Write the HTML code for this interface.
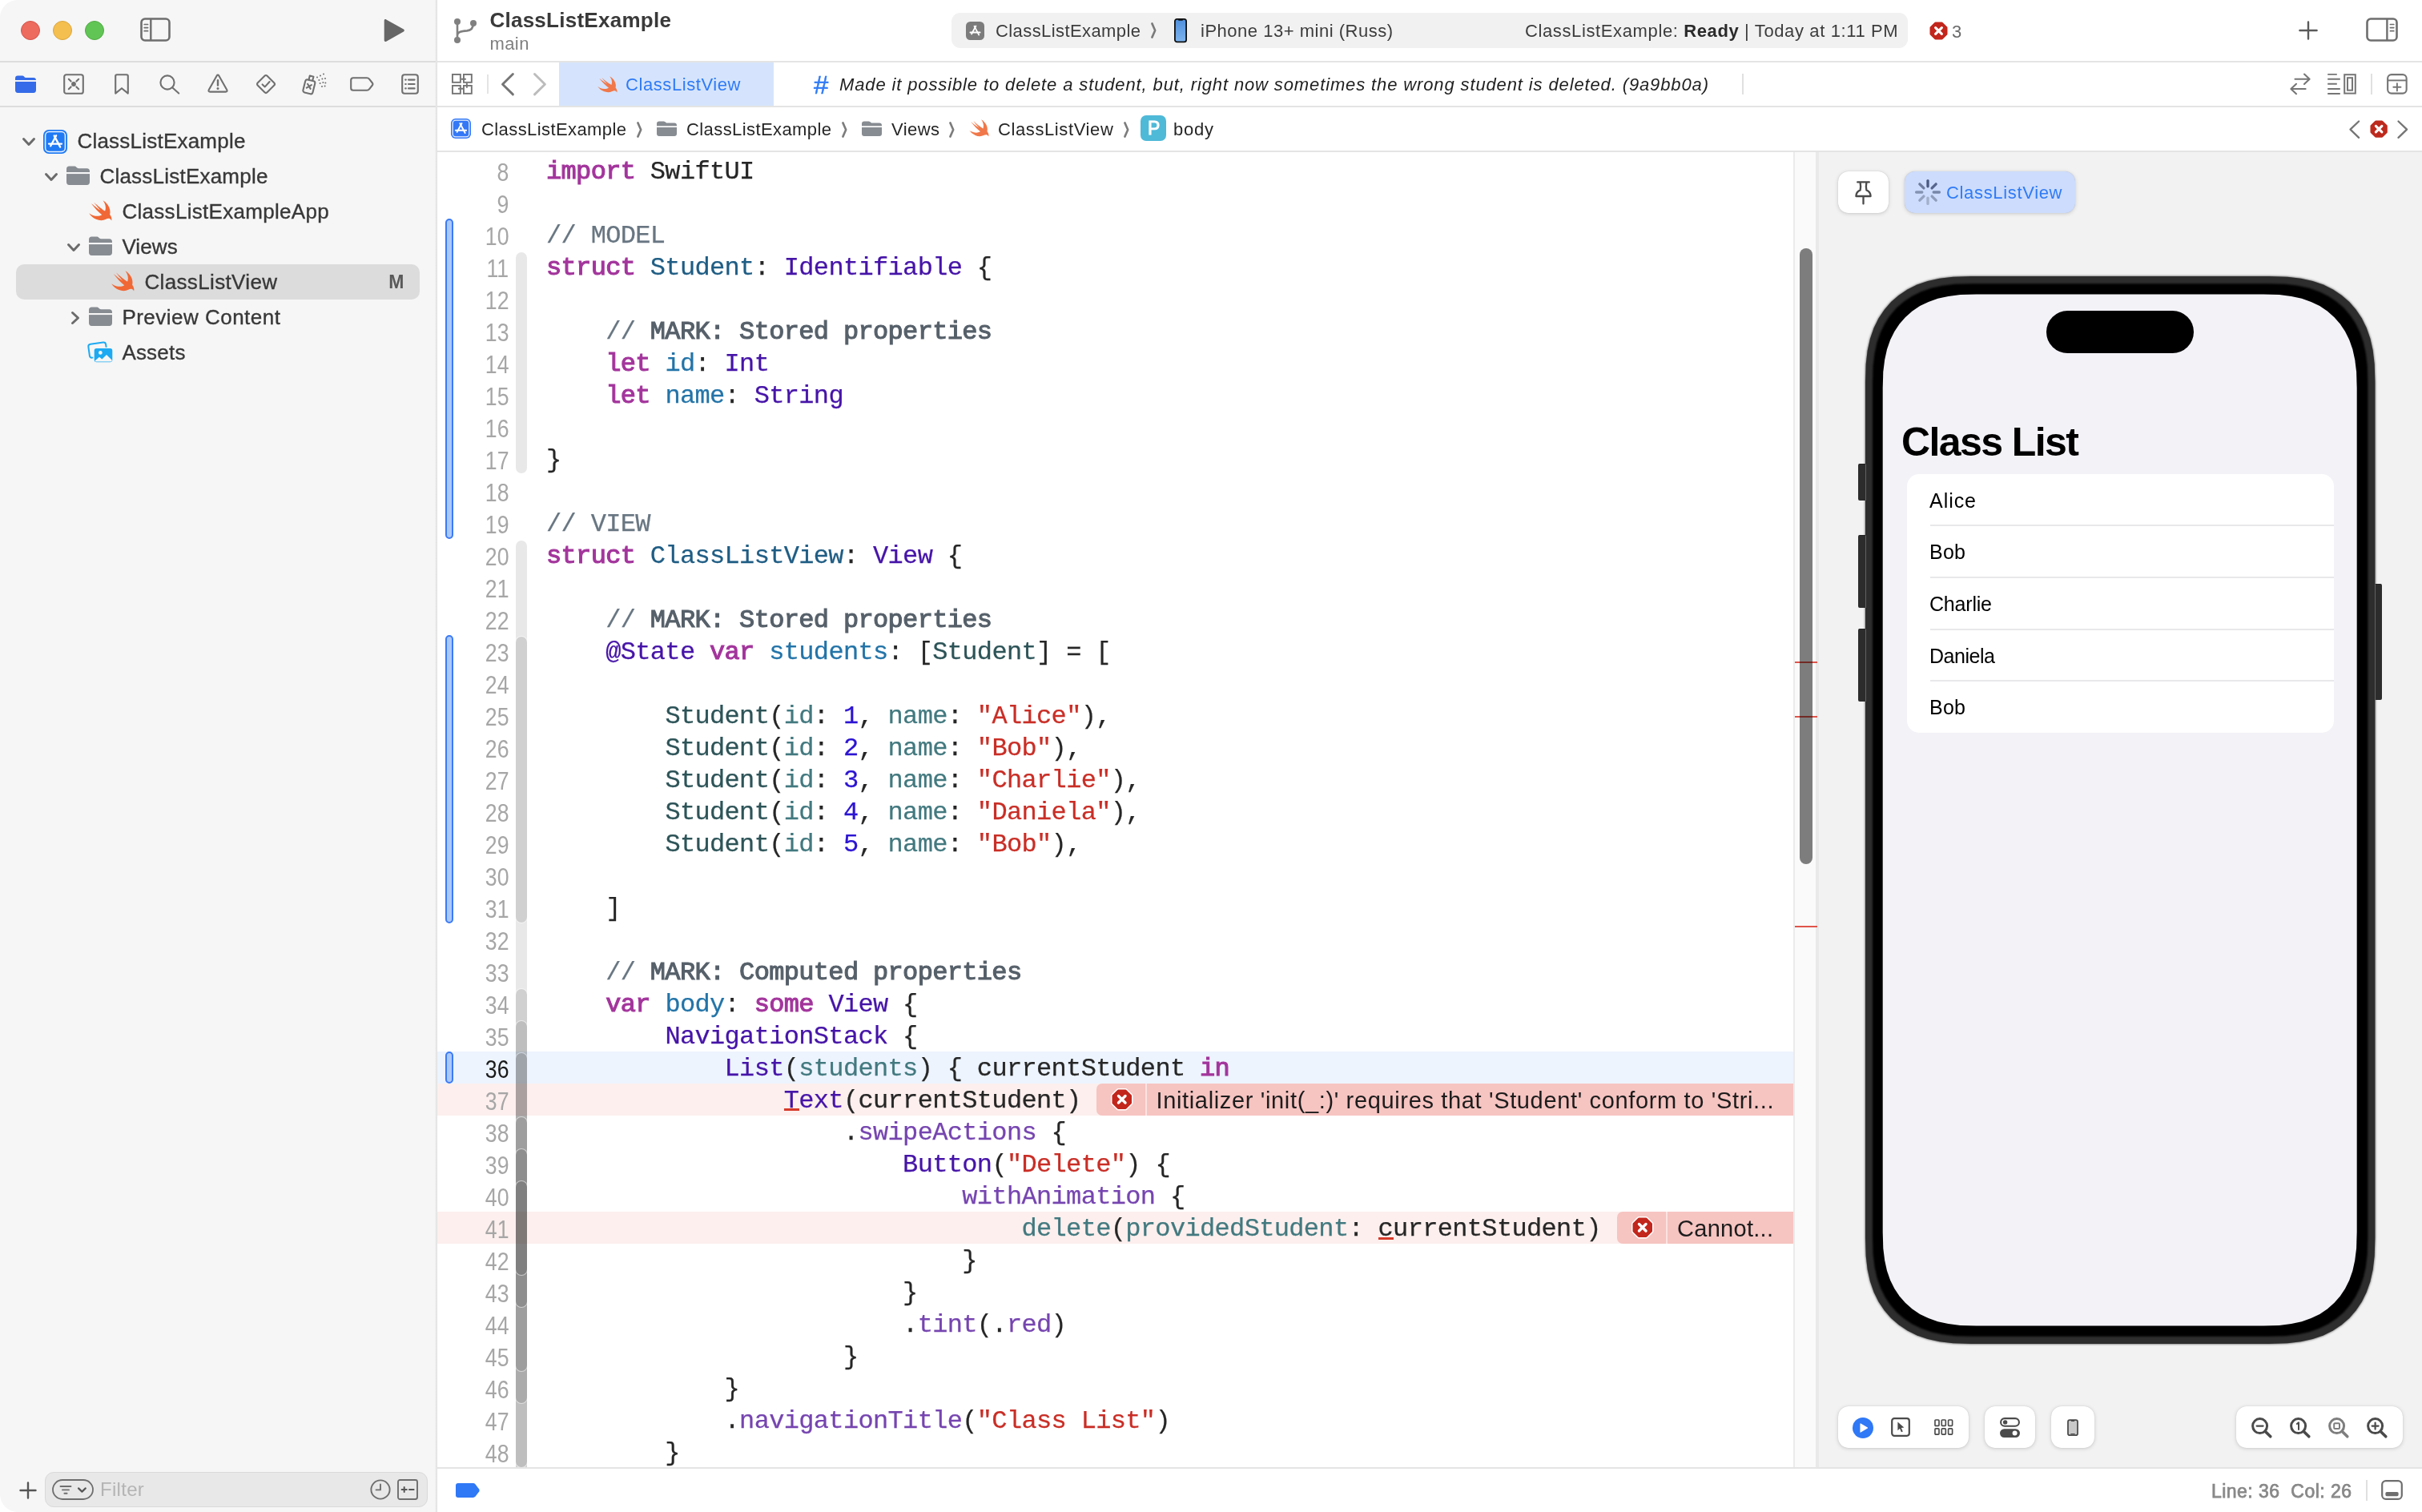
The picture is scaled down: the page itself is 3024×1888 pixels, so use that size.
<!DOCTYPE html>
<html lang="en">
<head>
<meta charset="utf-8">
<title>ClassListExample — ClassListView.swift</title>
<style>
*{box-sizing:border-box;margin:0;padding:0}
html,body{width:3024px;height:1888px;overflow:hidden;background:#fff}
body{position:relative;font-family:"Liberation Sans",sans-serif;color:#262626;-webkit-font-smoothing:antialiased}
#app{position:absolute;left:0;top:0;width:3024px;height:1888px;will-change:transform;overflow:hidden}
.abs{position:absolute}
.t{position:absolute;white-space:pre;line-height:1}
svg{position:absolute;overflow:visible}
/* ---------- frame ---------- */
#sidebar{left:0;top:0;width:544px;height:1888px;background:#f6f6f6;border-radius:22px 0 0 22px}
#sbdiv{left:542.5px;top:0;width:3.5px;height:1888px;background:linear-gradient(90deg,#f4f4f4,#dedede)}
.hl{position:absolute;height:2px;background:#e4e4e4}
.hls{position:absolute;height:2px;background:#dddddd}
/* ---------- sidebar tree ---------- */
.row{position:absolute;left:0;width:544px;height:44px}
.row .t{font-size:26px;top:9px;color:#2b2b2b}
#sel{left:20px;top:330px;width:504px;height:44px;border-radius:10px;background:#dcdcdc}
/* ---------- code ---------- */
#code{left:546px;top:190px;width:1693px;height:1642px;overflow:hidden;background:#fff}
.ln{position:absolute;left:0;width:1693px;height:40px}
.num{position:absolute;right:1604px;font:31px/40px "Liberation Sans",sans-serif;color:#a6a6a6;white-space:pre;height:40px;top:3px;transform:scaleX(.86);transform-origin:100% 50%}
.src{position:absolute;left:136px;top:1.5px;height:40px;font:32px/40px "Liberation Mono",monospace;letter-spacing:-0.658px;white-space:pre;color:#262626;-webkit-text-stroke:0.25px currentColor}
.k{color:#a3359c;-webkit-text-stroke:1.1px #a3359c}
.c{color:#687682}
.m{color:#56606a;-webkit-text-stroke:1.1px #56606a}
.s{color:#c92e26}
.n{color:#2c14d2}
.td{color:#1f5d84}
.od{color:#2374a8}
.pc{color:#2d5458}
.pf{color:#42797f}
.st{color:#4614a8}
.sf{color:#7645b0}
.cb{position:absolute;left:10px;width:10px;border:2px solid #3b7af5;background:#abc8fb;border-radius:5px}
.fr{position:absolute;left:98px;width:14px;border-radius:7px 7px 0 0}
</style>
</head>
<body>
<div id="app">
<div id="sidebar" class="abs"></div>
<div id="sbdiv" class="abs"></div>
<div class="hls" style="left:0;top:76px;width:544px"></div>
<div class="hls" style="left:0;top:132px;width:544px"></div>
<div class="hl" style="left:546px;top:76px;width:2478px"></div>
<div class="hl" style="left:546px;top:132px;width:2478px"></div>
<div class="hl" style="left:546px;top:188px;width:2478px"></div>
<div class="hl" style="left:546px;top:1832px;width:2478px"></div>
<div class="abs" style="left:26px;top:26px;width:24px;height:24px;border-radius:12px;background:#ed6a5f;border:1px solid #d5544a"></div>
<div class="abs" style="left:66px;top:26px;width:24px;height:24px;border-radius:12px;background:#f5bf4f;border:1px solid #dba53b"></div>
<div class="abs" style="left:106px;top:26px;width:24px;height:24px;border-radius:12px;background:#61c555;border:1px solid #4fab43"></div>
<svg style="left:175px;top:22px" width="38" height="30" viewBox="0 0 38 30" ><rect x="1.5" y="1.5" width="35" height="27" rx="4.5" fill="none" stroke="#6e6e6e" stroke-width="2.6"/><path d="M13.3 2 V28" stroke="#6e6e6e" stroke-width="2.4"/><path d="M5.2 8.5 H9.6 M5.2 12.6 H9.6 M5.2 16.7 H9.6" stroke="#6e6e6e" stroke-width="1.7" stroke-linecap="round"/></svg>
<svg style="left:478.7px;top:23.8px" width="26.6" height="28.2" viewBox="1.6 0.9 23.8 26.2" ><path d="M1.8 2.6 C1.8 1.2 3 .6 4.2 1.3 L24.3 12.6 C25.5 13.3 25.5 14.7 24.3 15.4 L4.2 26.7 C3 27.4 1.8 26.8 1.8 25.4 Z" fill="#666"/></svg>
<svg style="left:19px;top:94px" width="26" height="22" viewBox="0 0 30 24" preserveAspectRatio="none"><path fill="#356be8" d="M0 4.2C0 1.9 1.3 0.6 3.6 0.6h6.2c1.3 0 2 .3 2.9 1.1l1 .9c.6.5 1.1.7 2 .7h10.7c2.3 0 3.6 1.3 3.6 3.6v13.4c0 2.4-1.3 3.7-3.6 3.7H3.6C1.3 24 0 22.7 0 20.3z"/><rect x="0" y="6.6" width="30" height="2.1" fill="#f6f6f6"/></svg>
<svg style="left:79px;top:92px" width="26" height="26" viewBox="0 0 26 26" ><rect x="1.2" y="1.2" width="23.6" height="23.6" rx="2.6" fill="none" stroke="#707070" stroke-width="2.1" stroke-linecap="round" stroke-linejoin="round"/><circle cx="13" cy="13" r="2.9" fill="#707070"/><path d="M6.8 6.8 L9.6 9.6 M19.2 6.8 L16.4 9.6 M6.8 19.2 L9.6 16.4 M19.2 19.2 L16.4 16.4" fill="none" stroke="#707070" stroke-width="2.1" stroke-linecap="round" stroke-linejoin="round"/></svg>
<svg style="left:143px;top:92px" width="18" height="26" viewBox="0 0 18 26" ><path d="M1.2 3 Q1.2 1.2 3 1.2 H15 Q16.8 1.2 16.8 3 V24.6 L9 18.2 L1.2 24.6 Z" fill="none" stroke="#707070" stroke-width="2.1" stroke-linecap="round" stroke-linejoin="round"/></svg>
<svg style="left:199px;top:93px" width="26" height="25" viewBox="0 0 26 25" ><circle cx="10" cy="10" r="8.6" fill="none" stroke="#707070" stroke-width="2.1" stroke-linecap="round" stroke-linejoin="round" stroke-width="2.3"/><path d="M16.4 16.4 L24.2 23.6" fill="none" stroke="#707070" stroke-width="2.1" stroke-linecap="round" stroke-linejoin="round" stroke-width="2.8"/></svg>
<svg style="left:259px;top:92px" width="26" height="24" viewBox="0 0 26 24" ><path d="M13 1.6 Q13.8 1.6 14.3 2.5 L24.3 20.2 Q25.2 22.6 22.8 22.6 H3.2 Q.8 22.6 1.7 20.2 L11.7 2.5 Q12.2 1.6 13 1.6 Z" fill="none" stroke="#707070" stroke-width="2.1" stroke-linecap="round" stroke-linejoin="round"/><path d="M13 8.2 V14.6" stroke="#707070" stroke-width="2.4" stroke-linecap="round"/><circle cx="13" cy="18.4" r="1.5" fill="#707070"/></svg>
<svg style="left:319px;top:92px" width="26" height="26" viewBox="0 0 26 26" ><rect x="4.6" y="4.6" width="16.8" height="16.8" rx="2.2" transform="rotate(45 13 13)" fill="none" stroke="#707070" stroke-width="2.1" stroke-linecap="round" stroke-linejoin="round"/><path d="M8.6 13.4 L11.8 16.4 L17.6 10" fill="none" stroke="#707070" stroke-width="2.1" stroke-linecap="round" stroke-linejoin="round"/></svg>
<svg style="left:377px;top:91px" width="31" height="28" viewBox="0 0 31 28" ><g transform="rotate(14 10 16)"><rect x="3" y="9.4" width="12.4" height="16.4" rx="2.4" fill="none" stroke="#707070" stroke-width="2.1" stroke-linecap="round" stroke-linejoin="round"/><path d="M6.8 9 V4 H11.6 V9" fill="none" stroke="#707070" stroke-width="2.1" stroke-linecap="round" stroke-linejoin="round"/><path d="M6.6 14.6 L11.6 19.6 M11.6 14.6 L6.6 19.6" fill="none" stroke="#707070" stroke-width="2.1" stroke-linecap="round" stroke-linejoin="round" stroke-width="1.8"/></g><g fill="#707070"><circle cx="19" cy="5.6" r="1"/><circle cx="23" cy="3.4" r="1"/><circle cx="27" cy="1.6" r="1"/><circle cx="21.4" cy="9" r="1"/><circle cx="25.4" cy="7.6" r="1"/><circle cx="29" cy="7" r="1"/><circle cx="22.6" cy="13" r="1"/><circle cx="26.4" cy="12" r="1"/><circle cx="29.4" cy="12.6" r="1"/><circle cx="25" cy="17" r="1"/><circle cx="28.6" cy="16.6" r="1"/></g></svg>
<svg style="left:437px;top:96px" width="30" height="18" viewBox="0 0 30 18" ><path d="M4 1.2 H21 Q23 1.2 24.2 2.8 L28.2 8 Q28.9 9 28.2 10 L24.2 15.2 Q23 16.8 21 16.8 H4 Q1.2 16.8 1.2 14 V4 Q1.2 1.2 4 1.2 Z" fill="none" stroke="#707070" stroke-width="2.1" stroke-linecap="round" stroke-linejoin="round"/></svg>
<svg style="left:501px;top:92px" width="22" height="26" viewBox="0 0 22 26" ><rect x="1.2" y="1.2" width="19.6" height="23.6" rx="3" fill="none" stroke="#707070" stroke-width="2.1" stroke-linecap="round" stroke-linejoin="round"/><path d="M9 7.6 H16.6 M9 13 H16.6 M9 18.4 H16.6" fill="none" stroke="#707070" stroke-width="2.1" stroke-linecap="round" stroke-linejoin="round" stroke-width="1.9"/><path d="M5.2 7.6 H5.8 M5.2 13 H5.8 M5.2 18.4 H5.8" fill="none" stroke="#707070" stroke-width="2.1" stroke-linecap="round" stroke-linejoin="round" stroke-width="1.9"/></svg>
<div id="sel" class="abs"></div>
<svg style="left:28px;top:172.0px" width="16" height="10" viewBox="0 0 16 10" ><path d="M1.5 1.5 L8.0 8.5 L14.5 1.5" fill="none" stroke="#6b6b6b" stroke-width="3" stroke-linecap="round" stroke-linejoin="round"/></svg>
<svg style="left:54px;top:161.5px" width="30" height="30" viewBox="0 0 30 30" ><rect width="30" height="30" rx="7" fill="#1f7af4"/><rect x="2.6" y="2.6" width="24.8" height="24.8" rx="4.6" fill="none" stroke="#fff" stroke-width="1.5" opacity=".9"/><g stroke="#fff" stroke-width="2.3" stroke-linecap="round" fill="none"><path d="M16.2 7.2 L9.2 20.2"/><path d="M13.6 7.4 L21.2 21.6"/><path d="M7 17.6 H23"/></g></svg>
<div class="t" style="left:96.4px;top:163.2px;font-size:26px;color:#383838;letter-spacing:0.224px;-webkit-text-stroke:0.35px #383838;">ClassListExample</div>
<svg style="left:56px;top:216.0px" width="16" height="10" viewBox="0 0 16 10" ><path d="M1.5 1.5 L8.0 8.5 L14.5 1.5" fill="none" stroke="#6b6b6b" stroke-width="3" stroke-linecap="round" stroke-linejoin="round"/></svg>
<svg style="left:83px;top:206.7px" width="29" height="24" viewBox="0 0 30 24" preserveAspectRatio="none"><path fill="#878c92" d="M0 4.2C0 1.9 1.3 0.6 3.6 0.6h6.2c1.3 0 2 .3 2.9 1.1l1 .9c.6.5 1.1.7 2 .7h10.7c2.3 0 3.6 1.3 3.6 3.6v13.4c0 2.4-1.3 3.7-3.6 3.7H3.6C1.3 24 0 22.7 0 20.3z"/><rect x="0" y="8.0" width="30" height="2.1" fill="#f6f6f6"/></svg>
<div class="t" style="left:124.4px;top:207.2px;font-size:26px;color:#383838;letter-spacing:0.224px;-webkit-text-stroke:0.35px #383838;">ClassListExample</div>
<svg style="left:111px;top:249.9px" width="29" height="26.2" viewBox="2.3 3.3 18.6 16.9" preserveAspectRatio="none"><path fill="#f06835" d="M13.543 3.41c4.114 2.47 6.545 7.162 5.549 11.131-.024.093-.05.181-.076.272l.002.001c2.062 2.538 1.5 5.258 1.236 4.745-1.072-2.086-3.066-1.568-4.088-1.043a6.803 6.803 0 0 1-.281.158l-.02.012-.002.002c-2.115 1.123-4.957 1.205-7.812-.022a12.568 12.568 0 0 1-5.64-4.838c.649.48 1.35.902 2.097 1.252 3.019 1.414 6.051 1.311 8.197-.002C9.651 12.73 7.101 9.67 5.146 7.191a10.628 10.628 0 0 1-1.005-1.384c2.34 2.142 6.038 4.83 7.365 5.576C8.69 8.408 6.208 4.743 6.324 4.86c4.436 4.47 8.528 6.996 8.528 6.996.154.085.27.154.36.213.085-.215.16-.437.224-.668.708-2.588-.09-5.548-1.893-7.992z"/></svg>
<div class="t" style="left:152.4px;top:251.2px;font-size:26px;color:#383838;letter-spacing:0.295px;-webkit-text-stroke:0.35px #383838;">ClassListExampleApp</div>
<svg style="left:84px;top:304.0px" width="16" height="10" viewBox="0 0 16 10" ><path d="M1.5 1.5 L8.0 8.5 L14.5 1.5" fill="none" stroke="#6b6b6b" stroke-width="3" stroke-linecap="round" stroke-linejoin="round"/></svg>
<svg style="left:111px;top:294.7px" width="29" height="24" viewBox="0 0 30 24" preserveAspectRatio="none"><path fill="#878c92" d="M0 4.2C0 1.9 1.3 0.6 3.6 0.6h6.2c1.3 0 2 .3 2.9 1.1l1 .9c.6.5 1.1.7 2 .7h10.7c2.3 0 3.6 1.3 3.6 3.6v13.4c0 2.4-1.3 3.7-3.6 3.7H3.6C1.3 24 0 22.7 0 20.3z"/><rect x="0" y="8.0" width="30" height="2.1" fill="#f6f6f6"/></svg>
<div class="t" style="left:152.4px;top:295.2px;font-size:26px;color:#383838;letter-spacing:0.102px;-webkit-text-stroke:0.35px #383838;">Views</div>
<svg style="left:139px;top:337.9px" width="29" height="26.2" viewBox="2.3 3.3 18.6 16.9" preserveAspectRatio="none"><path fill="#f06835" d="M13.543 3.41c4.114 2.47 6.545 7.162 5.549 11.131-.024.093-.05.181-.076.272l.002.001c2.062 2.538 1.5 5.258 1.236 4.745-1.072-2.086-3.066-1.568-4.088-1.043a6.803 6.803 0 0 1-.281.158l-.02.012-.002.002c-2.115 1.123-4.957 1.205-7.812-.022a12.568 12.568 0 0 1-5.64-4.838c.649.48 1.35.902 2.097 1.252 3.019 1.414 6.051 1.311 8.197-.002C9.651 12.73 7.101 9.67 5.146 7.191a10.628 10.628 0 0 1-1.005-1.384c2.34 2.142 6.038 4.83 7.365 5.576C8.69 8.408 6.208 4.743 6.324 4.86c4.436 4.47 8.528 6.996 8.528 6.996.154.085.27.154.36.213.085-.215.16-.437.224-.668.708-2.588-.09-5.548-1.893-7.992z"/></svg>
<div class="t" style="left:180.4px;top:339.2px;font-size:26px;color:#383838;letter-spacing:0.362px;-webkit-text-stroke:0.35px #383838;">ClassListView</div>
<div class="t" style="left:485.3px;top:340.5px;font-size:23px;color:#5a5a5a;font-weight:700;">M</div>
<svg style="left:88.5px;top:388.5px" width="10" height="16" viewBox="0 0 10 16" ><path d="M1.5 1.5 L8.5 8.0 L1.5 14.5" fill="none" stroke="#6b6b6b" stroke-width="3" stroke-linecap="round" stroke-linejoin="round"/></svg>
<svg style="left:111px;top:382.7px" width="29" height="24" viewBox="0 0 30 24" preserveAspectRatio="none"><path fill="#878c92" d="M0 4.2C0 1.9 1.3 0.6 3.6 0.6h6.2c1.3 0 2 .3 2.9 1.1l1 .9c.6.5 1.1.7 2 .7h10.7c2.3 0 3.6 1.3 3.6 3.6v13.4c0 2.4-1.3 3.7-3.6 3.7H3.6C1.3 24 0 22.7 0 20.3z"/><rect x="0" y="8.0" width="30" height="2.1" fill="#f6f6f6"/></svg>
<div class="t" style="left:152.4px;top:383.2px;font-size:26px;color:#383838;letter-spacing:0.481px;-webkit-text-stroke:0.35px #383838;">Preview Content</div>
<svg style="left:109px;top:425.5px" width="33" height="28" viewBox="0 0 33 28" ><rect x="2" y="2.6" width="22" height="17" rx="3" transform="rotate(-8 13 11)" fill="none" stroke="#1daaf2" stroke-width="2"/><rect x="8" y="8.4" width="24" height="18.6" rx="3.4" fill="#1daaf2" stroke="#f6f6f6" stroke-width="1.4"/><circle cx="16.4" cy="14.4" r="2.3" fill="#f6f6f6"/><path d="M9.6 24.6 L15 19.8 L18.4 22.6 L24 17 L30.6 23.4 V25 Q30.6 25.6 30 25.6 H10.4 Q9.6 25.6 9.6 24.6 Z" fill="#f6f6f6"/></svg>
<div class="t" style="left:152.4px;top:427.2px;font-size:26px;color:#383838;letter-spacing:0.194px;-webkit-text-stroke:0.35px #383838;">Assets</div>
<svg style="left:24px;top:1850px" width="22" height="22" viewBox="0 0 22 22" ><path d="M11 1.5 V20.5 M1.5 11 H20.5" stroke="#555" stroke-width="2.4" stroke-linecap="round"/></svg>
<div class="abs" style="left:56px;top:1838px;width:478px;height:44px;border-radius:11px;background:#e8e8e8;border:1.5px solid #d9d9d9"></div>
<svg style="left:65px;top:1847px" width="52" height="26" viewBox="0 0 52 26" ><rect x="1" y="1" width="50" height="24" rx="12" fill="none" stroke="#6e6e6e" stroke-width="1.8"/><path d="M10.5 9 H23.5 M13 13.4 H21 M15.4 17.8 H18.6" stroke="#6e6e6e" stroke-width="1.9" stroke-linecap="round"/><path d="M33 11.4 L37.4 15.6 L41.8 11.4" fill="none" stroke="#555" stroke-width="2.2" stroke-linecap="round" stroke-linejoin="round"/></svg>
<div class="t" style="left:125px;top:1848px;font-size:24px;color:#b4b4b4;letter-spacing:0.3px;">Filter</div>
<svg style="left:462px;top:1847px" width="26" height="26" viewBox="0 0 26 26" ><circle cx="13" cy="13" r="11.6" fill="none" stroke="#6e6e6e" stroke-width="1.9"/><path d="M13 6.4 V13.4 H7.6" fill="none" stroke="#6e6e6e" stroke-width="1.9" stroke-linecap="round" stroke-linejoin="round"/></svg>
<svg style="left:496px;top:1847px" width="26" height="26" viewBox="0 0 26 26" ><rect x="1" y="1" width="24" height="24" rx="2.4" fill="none" stroke="#6e6e6e" stroke-width="1.9"/><path d="M5.6 13 H11.8 M8.7 9.9 V16.1 M15 13 H20.6" stroke="#555" stroke-width="2" stroke-linecap="round"/></svg>
<svg style="left:566px;top:22px" width="30" height="33" viewBox="0 0 30 33" ><g fill="#808080"><circle cx="5" cy="5" r="4"/><circle cx="25" cy="7" r="4"/><circle cx="5" cy="28" r="4"/></g><path d="M5 5 V28 M25 7 Q25 15.6 17 16.4 Q5 17 5 22" fill="none" stroke="#808080" stroke-width="2.6"/></svg>
<div class="t" style="left:611.4px;top:12px;font-size:26px;color:#3a3a3a;font-weight:700;letter-spacing:0.263px;">ClassListExample</div>
<div class="t" style="left:611.4px;top:44px;font-size:22px;color:#7f7f7f;letter-spacing:0.438px;">main</div>
<div class="abs" style="left:1188px;top:16px;width:1194px;height:44px;border-radius:11px;background:#f1f1f1"></div>
<svg style="left:1206px;top:27px" width="23" height="23" viewBox="0 0 30 30" ><rect width="30" height="30" rx="7" fill="#7c7c7c"/><g stroke="#fff" stroke-width="2.3" stroke-linecap="round" fill="none"><path d="M16.2 7.2 L9.2 20.2"/><path d="M13.6 7.4 L21.2 21.6"/><path d="M7 17.6 H23"/></g></svg>
<div class="t" style="left:1243px;top:28px;font-size:22px;color:#3c3c3c;letter-spacing:0.41px;">ClassListExample</div>
<svg style="left:1437px;top:28px" width="7" height="20" viewBox="0 0 7 20" ><path d="M1.4 1.4 L5.2 10 L1.4 18.6" fill="none" stroke="#7a7a7a" stroke-width="2.6" stroke-linecap="round" stroke-linejoin="round"/></svg>
<svg style="left:1466px;top:23px" width="16" height="31" viewBox="0 0 16 31" ><linearGradient id="pg" x1="0" y1="0" x2="0" y2="1"><stop offset="0" stop-color="#4f8fdc"/><stop offset="1" stop-color="#7db4ee"/></linearGradient><rect x=".9" y=".9" width="14.2" height="28.4" rx="2.6" fill="url(#pg)" stroke="#111" stroke-width="1.8"/><rect x="5" y=".9" width="6" height="1.8" rx=".9" fill="#111"/></svg>
<div class="t" style="left:1499px;top:28px;font-size:22px;color:#3c3c3c;letter-spacing:0.51px;">iPhone 13+ mini (Russ)</div>
<div class="t" style="left:1904px;top:28px;font-size:22px;color:#3c3c3c;letter-spacing:0.62px">ClassListExample: <b style="color:#2a2a2a">Ready</b> | Today at 1:11 PM</div>
<svg style="left:2407.5px;top:25.5px" width="25" height="25" viewBox="0 0 25 25" ><polygon points="22.00,16.44 16.44,22.00 8.56,22.00 3.00,16.44 3.00,8.56 8.56,3.00 16.44,3.00 22.00,8.56" fill="#fff" stroke="#fff" stroke-width="6" stroke-linejoin="round"/><polygon points="22.00,16.44 16.44,22.00 8.56,22.00 3.00,16.44 3.00,8.56 8.56,3.00 16.44,3.00 22.00,8.56" fill="#c2261c" stroke="#c2261c" stroke-width="3" stroke-linejoin="round"/><path d="M8.62 8.62 L16.38 16.38 M16.38 8.62 L8.62 16.38" stroke="#fff" stroke-width="3.12" stroke-linecap="round"/></svg>
<div class="t" style="left:2437px;top:28.5px;font-size:22px;color:#6a6a6a;letter-spacing:-1.25px;">3</div>
<svg style="left:2870px;top:26px" width="24" height="24" viewBox="0 0 24 24" ><path d="M12 1.4 V22.6 M1.4 12 H22.6" stroke="#5a5a5a" stroke-width="2.4" stroke-linecap="round"/></svg>
<svg style="left:2954px;top:22px" width="40" height="30" viewBox="0 0 40 30" ><rect x="1.5" y="1.5" width="37" height="27" rx="4.5" fill="none" stroke="#6e6e6e" stroke-width="2.6"/><path d="M26.4 2 V28" stroke="#6e6e6e" stroke-width="2.4"/><path d="M30.4 8.5 H34.8 M30.4 12.6 H34.8 M30.4 16.7 H34.8" stroke="#6e6e6e" stroke-width="1.7" stroke-linecap="round"/></svg>
<svg style="left:564.1px;top:92.1px" width="25.8" height="25.8" viewBox="0 0 25.8 25.8" ><g fill="none" stroke="#757575" stroke-width="1.9"><rect x=".95" y=".95" width="9.9" height="9.9"/><rect x="14.95" y=".95" width="9.9" height="9.9"/><rect x=".95" y="14.95" width="9.9" height="9.9"/><rect x="14.95" y="14.95" width="9.9" height="9.9"/><path d="M11.8 6.8 H17.8 M18.9 11.8 V17.8 M8 18.8 H14"/></g></svg>
<div class="abs" style="left:608px;top:93px;width:2px;height:24px;background:#e4e4e4"></div>
<svg style="left:625.6px;top:90.9px" width="15.9" height="28.4" viewBox="0 0 15.9 28.4" ><path d="M14.4 1.5 L1.5 14.2 L14.4 26.9" fill="none" stroke="#757575" stroke-width="2.9" stroke-linecap="round" stroke-linejoin="round"/></svg>
<svg style="left:665.8px;top:90.9px" width="15.9" height="28.4" viewBox="0 0 15.9 28.4" ><path d="M1.5 1.5 L14.4 14.2 L1.5 26.9" fill="none" stroke="#bcbcbc" stroke-width="2.9" stroke-linecap="round" stroke-linejoin="round"/></svg>
<div class="abs" style="left:698px;top:78px;width:268px;height:54px;background:#d5e4fc"></div>
<svg style="left:746px;top:95px" width="25" height="21" viewBox="2.3 3.3 18.6 16.9" preserveAspectRatio="none"><path fill="#f0784a" d="M13.543 3.41c4.114 2.47 6.545 7.162 5.549 11.131-.024.093-.05.181-.076.272l.002.001c2.062 2.538 1.5 5.258 1.236 4.745-1.072-2.086-3.066-1.568-4.088-1.043a6.803 6.803 0 0 1-.281.158l-.02.012-.002.002c-2.115 1.123-4.957 1.205-7.812-.022a12.568 12.568 0 0 1-5.64-4.838c.649.48 1.35.902 2.097 1.252 3.019 1.414 6.051 1.311 8.197-.002C9.651 12.73 7.101 9.67 5.146 7.191a10.628 10.628 0 0 1-1.005-1.384c2.34 2.142 6.038 4.83 7.365 5.576C8.69 8.408 6.208 4.743 6.324 4.86c4.436 4.47 8.528 6.996 8.528 6.996.154.085.27.154.36.213.085-.215.16-.437.224-.668.708-2.588-.09-5.548-1.893-7.992z"/></svg>
<div class="t" style="left:781px;top:95px;font-size:22px;color:#2f7bf6;letter-spacing:0.579px;">ClassListView</div>
<div class="t" style="left:1015.5px;top:91px;font-size:31px;color:#2f7bf6;-webkit-text-stroke:0.5px #2f7bf6;transform:scaleX(1.06);transform-origin:0 0;">#</div>
<div class="t" style="left:1048px;top:95px;font-size:22px;color:#1f1f1f;letter-spacing:0.874px;font-style:italic;">Made it possible to delete a student, but, right now sometimes the wrong student is deleted. (9a9bb0a)</div>
<div class="abs" style="left:2175px;top:92px;width:2px;height:26px;background:#e0e0e0"></div>
<svg style="left:2859px;top:91px" width="27" height="28" viewBox="0 0 27 28" ><path d="M6.5 7.8 H24.4 M18 1.6 L24.6 7.8 L18 14 M19.6 20 H1.7 M8 13.8 L1.4 20 L8 26.2" fill="none" stroke="#757575" stroke-width="2.1" stroke-linecap="round" stroke-linejoin="round"/></svg>
<svg style="left:2905px;top:91px" width="38" height="28" viewBox="0 0 38 28" ><path d="M1.2 1.9 H12.8 M1.2 7.8 H16.8 M1.2 13.8 H12.8 M1.2 20 H16.8 M1.2 26 H16.8" stroke="#757575" stroke-width="1.9"/><rect x="22.2" y="2.2" width="13.6" height="23.4" fill="none" stroke="#757575" stroke-width="2"/><rect x="26" y="6.2" width="6" height="15.5" fill="none" stroke="#757575" stroke-width="2"/></svg>
<div class="abs" style="left:2960px;top:92px;width:2px;height:26px;background:#e0e0e0"></div>
<svg style="left:2980px;top:92px" width="25.8" height="25.8" viewBox="0 0 27 27" ><rect x="1.2" y="1.2" width="24.6" height="24.6" rx="5" fill="none" stroke="#757575" stroke-width="2.2"/><path d="M1.6 8.8 H25.4" stroke="#757575" stroke-width="2"/><path d="M13.5 12.8 V22.4 M8.7 17.6 H18.3" stroke="#757575" stroke-width="2" stroke-linecap="round"/></svg>
<svg style="left:563px;top:147.5px" width="25" height="25" viewBox="0 0 30 30" ><rect width="30" height="30" rx="7" fill="#3478f6"/><rect x="2.6" y="2.6" width="24.8" height="24.8" rx="4.6" fill="none" stroke="#fff" stroke-width="1.5" opacity=".9"/><g stroke="#fff" stroke-width="2.3" stroke-linecap="round" fill="none"><path d="M16.2 7.2 L9.2 20.2"/><path d="M13.6 7.4 L21.2 21.6"/><path d="M7 17.6 H23"/></g></svg>
<div class="t" style="left:601px;top:150.5px;font-size:22px;color:#262626;letter-spacing:0.41px;">ClassListExample</div>
<svg style="left:795px;top:151.5px" width="7" height="20" viewBox="0 0 7 20" ><path d="M1.4 1.4 L5.2 10 L1.4 18.6" fill="none" stroke="#7c7c7c" stroke-width="2.6" stroke-linecap="round" stroke-linejoin="round"/></svg>
<svg style="left:820px;top:150.5px" width="25" height="19" viewBox="0 0 30 24" preserveAspectRatio="none"><path fill="#878c92" d="M0 4.2C0 1.9 1.3 0.6 3.6 0.6h6.2c1.3 0 2 .3 2.9 1.1l1 .9c.6.5 1.1.7 2 .7h10.7c2.3 0 3.6 1.3 3.6 3.6v13.4c0 2.4-1.3 3.7-3.6 3.7H3.6C1.3 24 0 22.7 0 20.3z"/><rect x="0" y="8.0" width="30" height="2.1" fill="#ffffff"/></svg>
<div class="t" style="left:857px;top:150.5px;font-size:22px;color:#262626;letter-spacing:0.41px;">ClassListExample</div>
<svg style="left:1051px;top:151.5px" width="7" height="20" viewBox="0 0 7 20" ><path d="M1.4 1.4 L5.2 10 L1.4 18.6" fill="none" stroke="#7c7c7c" stroke-width="2.6" stroke-linecap="round" stroke-linejoin="round"/></svg>
<svg style="left:1076px;top:150.5px" width="25" height="19" viewBox="0 0 30 24" preserveAspectRatio="none"><path fill="#878c92" d="M0 4.2C0 1.9 1.3 0.6 3.6 0.6h6.2c1.3 0 2 .3 2.9 1.1l1 .9c.6.5 1.1.7 2 .7h10.7c2.3 0 3.6 1.3 3.6 3.6v13.4c0 2.4-1.3 3.7-3.6 3.7H3.6C1.3 24 0 22.7 0 20.3z"/><rect x="0" y="8.0" width="30" height="2.1" fill="#ffffff"/></svg>
<div class="t" style="left:1113px;top:150.5px;font-size:22px;color:#262626;letter-spacing:0.426px;">Views</div>
<svg style="left:1185px;top:151.5px" width="7" height="20" viewBox="0 0 7 20" ><path d="M1.4 1.4 L5.2 10 L1.4 18.6" fill="none" stroke="#7c7c7c" stroke-width="2.6" stroke-linecap="round" stroke-linejoin="round"/></svg>
<svg style="left:1210px;top:149px" width="25" height="22" viewBox="2.3 3.3 18.6 16.9" preserveAspectRatio="none"><path fill="#f0784a" d="M13.543 3.41c4.114 2.47 6.545 7.162 5.549 11.131-.024.093-.05.181-.076.272l.002.001c2.062 2.538 1.5 5.258 1.236 4.745-1.072-2.086-3.066-1.568-4.088-1.043a6.803 6.803 0 0 1-.281.158l-.02.012-.002.002c-2.115 1.123-4.957 1.205-7.812-.022a12.568 12.568 0 0 1-5.64-4.838c.649.48 1.35.902 2.097 1.252 3.019 1.414 6.051 1.311 8.197-.002C9.651 12.73 7.101 9.67 5.146 7.191a10.628 10.628 0 0 1-1.005-1.384c2.34 2.142 6.038 4.83 7.365 5.576C8.69 8.408 6.208 4.743 6.324 4.86c4.436 4.47 8.528 6.996 8.528 6.996.154.085.27.154.36.213.085-.215.16-.437.224-.668.708-2.588-.09-5.548-1.893-7.992z"/></svg>
<div class="t" style="left:1246px;top:150.5px;font-size:22px;color:#262626;letter-spacing:0.604px;">ClassListView</div>
<svg style="left:1403px;top:151.5px" width="7" height="20" viewBox="0 0 7 20" ><path d="M1.4 1.4 L5.2 10 L1.4 18.6" fill="none" stroke="#7c7c7c" stroke-width="2.6" stroke-linecap="round" stroke-linejoin="round"/></svg>
<div class="abs" style="left:1424px;top:144px;width:32px;height:32px;border-radius:7px;background:#4fb9d8"></div>
<div class="t" style="left:1433px;top:149px;font-size:23px;color:#fff;-webkit-text-stroke:0.9px #fff;">P</div>
<div class="t" style="left:1465px;top:150.5px;font-size:22px;color:#262626;letter-spacing:0.76px;">body</div>
<svg style="left:2933.4px;top:149.7px" width="13.6" height="23.4" viewBox="0 0 13.6 23.4" ><path d="M12.1 1.5 L1.5 11.7 L12.1 21.9" fill="none" stroke="#757575" stroke-width="2.3" stroke-linecap="round" stroke-linejoin="round"/></svg>
<svg style="left:2957.85px;top:148.85px" width="24.3" height="24.3" viewBox="0 0 24.3 24.3" ><polygon points="21.30,15.94 15.94,21.30 8.36,21.30 3.00,15.94 3.00,8.36 8.36,3.00 15.94,3.00 21.30,8.36" fill="#fff" stroke="#fff" stroke-width="6" stroke-linejoin="round"/><polygon points="21.30,15.94 15.94,21.30 8.36,21.30 3.00,15.94 3.00,8.36 8.36,3.00 15.94,3.00 21.30,8.36" fill="#bd2a1d" stroke="#bd2a1d" stroke-width="3" stroke-linejoin="round"/><path d="M8.38 8.38 L15.92 15.92 M15.92 8.38 L8.38 15.92" stroke="#fff" stroke-width="3.04" stroke-linecap="round"/></svg>
<svg style="left:2992.6px;top:149.7px" width="13.6" height="23.4" viewBox="0 0 13.6 23.4" ><path d="M1.5 1.5 L12.1 11.7 L1.5 21.9" fill="none" stroke="#757575" stroke-width="2.3" stroke-linecap="round" stroke-linejoin="round"/></svg>
<svg style="left:569px;top:1852px" width="30" height="18" viewBox="0 0 30 18" ><path d="M3 0 H21.6 Q23.4 0 24.6 1.4 L29.2 7.4 Q30.2 9 29.2 10.6 L24.6 16.6 Q23.4 18 21.6 18 H3 Q0 18 0 15 V3 Q0 0 3 0 Z" fill="#2f78f6"/></svg>
<div class="t" style="left:2761px;top:1850.5px;font-size:23px;color:#8a8a8a;letter-spacing:0.468px;-webkit-text-stroke:0.75px #858585;">Line: 36  Col: 26</div>
<div class="abs" style="left:2954px;top:1848px;width:2px;height:26px;background:#e0e0e0"></div>
<svg style="left:2973px;top:1848px" width="27" height="25" viewBox="0 0 27 25" ><rect x="1.2" y="1.2" width="24.6" height="22.6" rx="4.6" fill="none" stroke="#6e6e6e" stroke-width="2.2"/><rect x="5.4" y="15" width="16.2" height="5.2" rx="1.6" fill="#6e6e6e"/></svg>
<div id="code" class="abs">
<div class="abs" style="left:0;top:1123px;width:1693px;height:40px;background:#edf4fe"></div>
<div class="abs" style="left:0;top:1163px;width:1693px;height:40px;background:#fcefed"></div>
<div class="abs" style="left:0;top:1323px;width:1693px;height:40px;background:#fcefed"></div>
<div class="cb" style="top:83px;height:400px"></div>
<div class="cb" style="top:603px;height:360px"></div>
<div class="cb" style="top:1123px;height:40px"></div>
<div class="fr" style="top:124.5px;height:276.5px;background:#e8e8e8;border-radius:7px;box-shadow:0 0 0 1px rgba(255,255,255,.5)"></div>
<div class="fr" style="top:484.5px;height:1197.5px;background:#e8e8e8;border-radius:7px;box-shadow:0 0 0 1px rgba(255,255,255,.5)"></div>
<div class="fr" style="top:604.5px;height:357.5px;background:#d0d0d0;border-radius:7px;box-shadow:0 0 0 1px rgba(255,255,255,.5)"></div>
<div class="fr" style="top:1044.5px;height:637.5px;background:#d0d0d0;border-radius:7px;box-shadow:0 0 0 1px rgba(255,255,255,.5)"></div>
<div class="fr" style="top:1084.5px;height:557.5px;background:#bebebe;border-radius:7px;box-shadow:0 0 0 1px rgba(255,255,255,.5)"></div>
<div class="fr" style="top:1124.5px;height:437.5px;background:#ababab;border-radius:7px;box-shadow:0 0 0 1px rgba(255,255,255,.5)"></div>
<div class="fr" style="top:1204.5px;height:317.5px;background:#9e9e9e;border-radius:7px;box-shadow:0 0 0 1px rgba(255,255,255,.5)"></div>
<div class="fr" style="top:1244.5px;height:197.5px;background:#8e8e8e;border-radius:7px;box-shadow:0 0 0 1px rgba(255,255,255,.5)"></div>
<div class="fr" style="top:1284.5px;height:117.5px;background:#808080;border-radius:7px;box-shadow:0 0 0 1px rgba(255,255,255,.5)"></div>
<div class="abs" style="left:97px;top:1123px;width:16px;height:40px;background:#edf4fe;mix-blend-mode:multiply"></div>
<div class="abs" style="left:97px;top:1163px;width:16px;height:40px;background:#fcefed;mix-blend-mode:multiply"></div>
<div class="abs" style="left:97px;top:1323px;width:16px;height:40px;background:#fcefed;mix-blend-mode:multiply"></div>
<div class="ln" style="top:3px"><span class="num">8</span><span class="src"><span class="k">import</span> SwiftUI</span></div>
<div class="ln" style="top:43px"><span class="num">9</span><span class="src"></span></div>
<div class="ln" style="top:83px"><span class="num">10</span><span class="src"><span class="c">// MODEL</span></span></div>
<div class="ln" style="top:123px"><span class="num">11</span><span class="src"><span class="k">struct</span> <span class="td">Student</span>: <span class="st">Identifiable</span> {</span></div>
<div class="ln" style="top:163px"><span class="num">12</span><span class="src"></span></div>
<div class="ln" style="top:203px"><span class="num">13</span><span class="src">    <span class="c">// </span><span class="m">MARK: Stored properties</span></span></div>
<div class="ln" style="top:243px"><span class="num">14</span><span class="src">    <span class="k">let</span> <span class="od">id</span>: <span class="st">Int</span></span></div>
<div class="ln" style="top:283px"><span class="num">15</span><span class="src">    <span class="k">let</span> <span class="od">name</span>: <span class="st">String</span></span></div>
<div class="ln" style="top:323px"><span class="num">16</span><span class="src"></span></div>
<div class="ln" style="top:363px"><span class="num">17</span><span class="src">}</span></div>
<div class="ln" style="top:403px"><span class="num">18</span><span class="src"></span></div>
<div class="ln" style="top:443px"><span class="num">19</span><span class="src"><span class="c">// VIEW</span></span></div>
<div class="ln" style="top:483px"><span class="num">20</span><span class="src"><span class="k">struct</span> <span class="td">ClassListView</span>: <span class="st">View</span> {</span></div>
<div class="ln" style="top:523px"><span class="num">21</span><span class="src"></span></div>
<div class="ln" style="top:563px"><span class="num">22</span><span class="src">    <span class="c">// </span><span class="m">MARK: Stored properties</span></span></div>
<div class="ln" style="top:603px"><span class="num">23</span><span class="src">    <span class="st">@State</span> <span class="k">var</span> <span class="od">students</span>: [<span class="pc">Student</span>] = [</span></div>
<div class="ln" style="top:643px"><span class="num">24</span><span class="src"></span></div>
<div class="ln" style="top:683px"><span class="num">25</span><span class="src">        <span class="pc">Student</span>(<span class="pf">id</span>: <span class="n">1</span>, <span class="pf">name</span>: <span class="s">"Alice"</span>),</span></div>
<div class="ln" style="top:723px"><span class="num">26</span><span class="src">        <span class="pc">Student</span>(<span class="pf">id</span>: <span class="n">2</span>, <span class="pf">name</span>: <span class="s">"Bob"</span>),</span></div>
<div class="ln" style="top:763px"><span class="num">27</span><span class="src">        <span class="pc">Student</span>(<span class="pf">id</span>: <span class="n">3</span>, <span class="pf">name</span>: <span class="s">"Charlie"</span>),</span></div>
<div class="ln" style="top:803px"><span class="num">28</span><span class="src">        <span class="pc">Student</span>(<span class="pf">id</span>: <span class="n">4</span>, <span class="pf">name</span>: <span class="s">"Daniela"</span>),</span></div>
<div class="ln" style="top:843px"><span class="num">29</span><span class="src">        <span class="pc">Student</span>(<span class="pf">id</span>: <span class="n">5</span>, <span class="pf">name</span>: <span class="s">"Bob"</span>),</span></div>
<div class="ln" style="top:883px"><span class="num">30</span><span class="src"></span></div>
<div class="ln" style="top:923px"><span class="num">31</span><span class="src">    ]</span></div>
<div class="ln" style="top:963px"><span class="num">32</span><span class="src"></span></div>
<div class="ln" style="top:1003px"><span class="num">33</span><span class="src">    <span class="c">// </span><span class="m">MARK: Computed properties</span></span></div>
<div class="ln" style="top:1043px"><span class="num">34</span><span class="src">    <span class="k">var</span> <span class="od">body</span>: <span class="k">some</span> <span class="st">View</span> {</span></div>
<div class="ln" style="top:1083px"><span class="num">35</span><span class="src">        <span class="st">NavigationStack</span> {</span></div>
<div class="ln" style="top:1123px"><span class="num" style="color:#1a1a1a">36</span><span class="src">            <span class="st">List</span>(<span class="pf">students</span>) { currentStudent <span class="k">in</span></span></div>
<div class="ln" style="top:1163px"><span class="num">37</span><span class="src">                <span class="st">Text</span>(currentStudent)</span></div>
<div class="ln" style="top:1203px"><span class="num">38</span><span class="src">                    .<span class="sf">swipeActions</span> {</span></div>
<div class="ln" style="top:1243px"><span class="num">39</span><span class="src">                        <span class="st">Button</span>(<span class="s">"Delete"</span>) {</span></div>
<div class="ln" style="top:1283px"><span class="num">40</span><span class="src">                            <span class="sf">withAnimation</span> {</span></div>
<div class="ln" style="top:1323px"><span class="num">41</span><span class="src">                                <span class="pf">delete</span>(<span class="pf">providedStudent</span>: currentStudent)</span></div>
<div class="ln" style="top:1363px"><span class="num">42</span><span class="src">                            }</span></div>
<div class="ln" style="top:1403px"><span class="num">43</span><span class="src">                        }</span></div>
<div class="ln" style="top:1443px"><span class="num">44</span><span class="src">                        .<span class="sf">tint</span>(.<span class="sf">red</span>)</span></div>
<div class="ln" style="top:1483px"><span class="num">45</span><span class="src">                    }</span></div>
<div class="ln" style="top:1523px"><span class="num">46</span><span class="src">            }</span></div>
<div class="ln" style="top:1563px"><span class="num">47</span><span class="src">            .<span class="sf">navigationTitle</span>(<span class="s">"Class List"</span>)</span></div>
<div class="ln" style="top:1603px"><span class="num">48</span><span class="src">        }</span></div>
</div>
<div class="abs" style="left:1368.5px;top:1353px;width:870.5px;height:40px;border-radius:7px 0 0 7px;background:#f6c4c1"></div>
<div class="abs" style="left:1430px;top:1353px;width:2px;height:40px;background:#fbe3e1"></div>
<svg style="left:1386.75px;top:1359.25px" width="27.5" height="27.5" viewBox="0 0 27.5 27.5" ><polygon points="24.50,18.20 18.20,24.50 9.30,24.50 3.00,18.20 3.00,9.30 9.30,3.00 18.20,3.00 24.50,9.30" fill="#fff" stroke="#fff" stroke-width="6" stroke-linejoin="round"/><polygon points="24.50,18.20 18.20,24.50 9.30,24.50 3.00,18.20 3.00,9.30 9.30,3.00 18.20,3.00 24.50,9.30" fill="#c2261c" stroke="#c2261c" stroke-width="3" stroke-linejoin="round"/><path d="M9.49 9.49 L18.01 18.01 M18.01 9.49 L9.49 18.01" stroke="#fff" stroke-width="3.44" stroke-linecap="round"/></svg>
<div class="t" style="left:1443.5px;top:1360px;font-size:29px;color:#1c1c1c;letter-spacing:0.649px;">Initializer &#39;init(_:)&#39; requires that &#39;Student&#39; conform to &#39;Stri...</div>
<div class="abs" style="left:2018.5px;top:1513px;width:220.5px;height:40px;border-radius:7px 0 0 7px;background:#f6c4c1"></div>
<div class="abs" style="left:2080px;top:1513px;width:2px;height:40px;background:#fbe3e1"></div>
<svg style="left:2036.75px;top:1519.25px" width="27.5" height="27.5" viewBox="0 0 27.5 27.5" ><polygon points="24.50,18.20 18.20,24.50 9.30,24.50 3.00,18.20 3.00,9.30 9.30,3.00 18.20,3.00 24.50,9.30" fill="#fff" stroke="#fff" stroke-width="6" stroke-linejoin="round"/><polygon points="24.50,18.20 18.20,24.50 9.30,24.50 3.00,18.20 3.00,9.30 9.30,3.00 18.20,3.00 24.50,9.30" fill="#c2261c" stroke="#c2261c" stroke-width="3" stroke-linejoin="round"/><path d="M9.49 9.49 L18.01 18.01 M18.01 9.49 L9.49 18.01" stroke="#fff" stroke-width="3.44" stroke-linecap="round"/></svg>
<div class="t" style="left:2094px;top:1520px;font-size:29px;color:#1c1c1c;letter-spacing:0.289px;">Cannot...</div>
<div class="abs" style="left:978.5px;top:1384px;width:19.5px;height:3px;background:#d63a2a"></div>
<div class="abs" style="left:1720.5px;top:1545px;width:19.5px;height:3px;background:#d63a2a"></div>
<div class="abs" style="left:2239px;top:190px;width:28px;height:1642px;background:#fafafa;border-left:2px solid #ebebeb"></div>
<div class="abs" style="left:2267px;top:190px;width:4px;height:1642px;background:#e9e9e9"></div>
<div class="abs" style="left:2271px;top:190px;width:753px;height:1642px;background:#f2f2f2"></div>
<div class="abs" style="left:2241px;top:826px;width:28px;height:2px;background:#e0554b"></div>
<div class="abs" style="left:2241px;top:894px;width:28px;height:2px;background:#e0554b"></div>
<div class="abs" style="left:2241px;top:1156px;width:28px;height:2px;background:#e0554b"></div>
<div class="abs" style="left:2247px;top:310px;width:16px;height:769px;border-radius:8px;background:rgba(0,0,0,.5)"></div>
<div class="abs" style="left:2295px;top:214px;width:63px;height:52px;border-radius:13px;background:#fff;box-shadow:0 1px 5px rgba(0,0,0,.16),0 0 1px rgba(0,0,0,.2)"></div>
<svg style="left:2316px;top:226px" width="21" height="30" viewBox="0 0 21 30" ><path d="M3.2 1.4 H17.8 M6.6 1.8 Q7.6 7 6.6 11.4 Q1.6 13.4 1.4 19 H19.6 Q19.4 13.4 14.4 11.4 Q13.4 7 14.4 1.8 M10.5 19.4 V28.4" fill="none" stroke="#4a4a4a" stroke-width="2.3" stroke-linecap="round" stroke-linejoin="round"/></svg>
<div class="abs" style="left:2378px;top:214px;width:213px;height:52px;border-radius:13px;background:#cddcfc;box-shadow:0 1px 5px rgba(0,0,0,.16),0 0 1px rgba(0,0,0,.2)"></div>
<svg style="left:2391px;top:224px" width="32" height="32" viewBox="0 0 32 32" ><g stroke-width="3.3" stroke-linecap="round"><path d="M16.00 8.80 L16.00 1.60" stroke="#4a5a82"/><path d="M21.09 10.91 L26.18 5.82" stroke="#55658c"/><path d="M23.20 16.00 L30.40 16.00" stroke="#7786a8"/><path d="M21.09 21.09 L26.18 26.18" stroke="#8f9dbb"/><path d="M16.00 23.20 L16.00 30.40" stroke="#a4b0cb"/><path d="M10.91 21.09 L5.82 26.18" stroke="#95a2c0"/><path d="M8.80 16.00 L1.60 16.00" stroke="#8593b3"/><path d="M10.91 10.91 L5.82 5.82" stroke="#6e7da0"/></g></svg>
<div class="t" style="left:2430px;top:229.6px;font-size:22px;color:#2f7bf6;letter-spacing:0.663px;">ClassListView</div>
<svg style="left:2329.3px;top:344.5px;filter:drop-shadow(0 0 1.6px rgba(0,0,0,.75))" width="636.4" height="1333" viewBox="0 0 636.4 1333" ><path d="M0.0 132.4 L0.7 109.4 L2.7 92.6 L6.0 77.8 L10.6 64.5 L16.5 52.5 L23.7 41.7 L32.1 32.1 L41.7 23.7 L52.5 16.5 L64.5 10.6 L77.8 6.0 L92.6 2.7 L109.4 0.7 L132.4 0.0 L504.0 0.0 L527.0 0.7 L543.8 2.7 L558.6 6.0 L571.9 10.6 L583.9 16.5 L594.7 23.7 L604.3 32.1 L612.7 41.7 L619.9 52.5 L625.8 64.5 L630.4 77.8 L633.7 92.6 L635.7 109.4 L636.4 132.4 L636.4 1200.6 L635.7 1223.6 L633.7 1240.4 L630.4 1255.2 L625.8 1268.5 L619.9 1280.5 L612.7 1291.3 L604.3 1300.9 L594.7 1309.3 L583.9 1316.5 L571.9 1322.4 L558.6 1327.0 L543.8 1330.3 L527.0 1332.3 L504.0 1333.0 L132.4 1333.0 L109.4 1332.3 L92.6 1330.3 L77.8 1327.0 L64.5 1322.4 L52.5 1316.5 L41.7 1309.3 L32.1 1300.9 L23.7 1291.3 L16.5 1280.5 L10.6 1268.5 L6.0 1255.2 L2.7 1240.4 L0.7 1223.6 L0.0 1200.6Z" fill="#2d2d2d"/><path d="M9.0 133.6 L9.6 112.1 L11.5 96.2 L14.6 82.3 L19.0 69.8 L24.5 58.5 L31.2 48.4 L39.1 39.3 L48.2 31.4 L58.3 24.7 L69.6 19.2 L82.1 14.8 L96.0 11.7 L111.9 9.8 L133.4 9.2 L503.0 9.2 L524.5 9.8 L540.4 11.7 L554.3 14.8 L566.8 19.2 L578.1 24.7 L588.2 31.4 L597.3 39.3 L605.2 48.4 L611.9 58.5 L617.4 69.8 L621.8 82.3 L624.9 96.2 L626.8 112.1 L627.4 133.6 L627.4 1199.4 L626.8 1220.9 L624.9 1236.8 L621.8 1250.7 L617.4 1263.2 L611.9 1274.5 L605.2 1284.6 L597.3 1293.7 L588.2 1301.6 L578.1 1308.3 L566.8 1313.8 L554.3 1318.2 L540.4 1321.3 L524.5 1323.2 L503.0 1323.8 L133.4 1323.8 L111.9 1323.2 L96.0 1321.3 L82.1 1318.2 L69.6 1313.8 L58.3 1308.3 L48.2 1301.6 L39.1 1293.7 L31.2 1284.6 L24.5 1274.5 L19.0 1263.2 L14.6 1250.7 L11.5 1236.8 L9.6 1220.9 L9.0 1199.4Z" fill="#000" style="filter:blur(1.3px)"/><path d="M21.7 139.6 L22.3 119.3 L24.1 104.4 L27.0 91.3 L31.1 79.6 L36.3 68.9 L42.6 59.4 L50.1 50.9 L58.6 43.4 L68.1 37.1 L78.8 31.9 L90.5 27.8 L103.6 24.9 L118.5 23.1 L138.8 22.5 L496.6 22.5 L516.9 23.1 L531.8 24.9 L544.9 27.8 L556.6 31.9 L567.3 37.1 L576.8 43.4 L585.3 50.9 L592.8 59.4 L599.1 68.9 L604.3 79.6 L608.4 91.3 L611.3 104.4 L613.1 119.3 L613.7 139.6 L613.7 1193.4 L613.1 1213.7 L611.3 1228.6 L608.4 1241.7 L604.3 1253.4 L599.1 1264.1 L592.8 1273.6 L585.3 1282.1 L576.8 1289.6 L567.3 1295.9 L556.6 1301.1 L544.9 1305.2 L531.8 1308.1 L516.9 1309.9 L496.6 1310.5 L138.8 1310.5 L118.5 1309.9 L103.6 1308.1 L90.5 1305.2 L78.8 1301.1 L68.1 1295.9 L58.6 1289.6 L50.1 1282.1 L42.6 1273.6 L36.3 1264.1 L31.1 1253.4 L27.0 1241.7 L24.1 1228.6 L22.3 1213.7 L21.7 1193.4Z" fill="#f2f2f7"/></svg>
<div class="abs" style="left:2320.4px;top:578.5px;width:9.6px;height:46.5px;border-radius:2px 0 0 2px;background:#2c2c2c;border-right:1.4px solid #626262;border-top:1.5px solid #222"></div>
<div class="abs" style="left:2320.4px;top:667.5px;width:9.6px;height:91.5px;border-radius:2px 0 0 2px;background:#2c2c2c;border-right:1.4px solid #626262;border-top:1.5px solid #222"></div>
<div class="abs" style="left:2320.4px;top:784.5px;width:9.6px;height:91.5px;border-radius:2px 0 0 2px;background:#2c2c2c;border-right:1.4px solid #626262;border-top:1.5px solid #222"></div>
<div class="abs" style="left:2964.6px;top:728.5px;width:9.4px;height:145.5px;border-radius:0 2px 2px 0;background:#2c2c2c;border-left:1.4px solid #626262;border-top:1.5px solid #222"></div>
<div class="abs" style="left:2555px;top:387.5px;width:184px;height:53.5px;border-radius:27px;background:#000"></div>
<div class="t" style="left:2374px;top:526.5px;font-size:50px;color:#000;font-weight:700;letter-spacing:-1.58px;">Class List</div>
<div class="abs" style="left:2380.5px;top:591.5px;width:533px;height:323.5px;border-radius:15px;background:#fff"></div>
<div class="t" style="left:2409px;top:612.5px;font-size:25px;color:#000;letter-spacing:0.953px;">Alice</div>
<div class="abs" style="left:2410px;top:655px;width:503.5px;height:2px;background:#e8e8eb"></div>
<div class="t" style="left:2409px;top:677.2px;font-size:25px;color:#000;letter-spacing:0.258px;">Bob</div>
<div class="abs" style="left:2410px;top:720px;width:503.5px;height:2px;background:#e8e8eb"></div>
<div class="t" style="left:2409px;top:741.9px;font-size:25px;color:#000;letter-spacing:-0.201px;">Charlie</div>
<div class="abs" style="left:2410px;top:785px;width:503.5px;height:2px;background:#e8e8eb"></div>
<div class="t" style="left:2409px;top:806.6px;font-size:25px;color:#000;letter-spacing:-0.464px;">Daniela</div>
<div class="abs" style="left:2410px;top:849px;width:503.5px;height:2px;background:#e8e8eb"></div>
<div class="t" style="left:2409px;top:871.3px;font-size:25px;color:#000;letter-spacing:0.258px;">Bob</div>
<div class="abs" style="left:2295px;top:1756px;width:163px;height:51.5px;border-radius:13px;background:#fff;box-shadow:0 1px 5px rgba(0,0,0,.16),0 0 1px rgba(0,0,0,.2)"></div>
<div class="abs" style="left:2478px;top:1756px;width:63px;height:51.5px;border-radius:13px;background:#fff;box-shadow:0 1px 5px rgba(0,0,0,.16),0 0 1px rgba(0,0,0,.2)"></div>
<div class="abs" style="left:2561px;top:1756px;width:54px;height:51.5px;border-radius:13px;background:#fff;box-shadow:0 1px 5px rgba(0,0,0,.16),0 0 1px rgba(0,0,0,.2)"></div>
<div class="abs" style="left:2792px;top:1756px;width:208px;height:51.5px;border-radius:13px;background:#fff;box-shadow:0 1px 5px rgba(0,0,0,.16),0 0 1px rgba(0,0,0,.2)"></div>
<svg style="left:2313px;top:1770px" width="26" height="26" viewBox="0 0 27 27" ><circle cx="13.5" cy="13.5" r="13.5" fill="#2f78f6"/><path d="M10.4 8.2 L19.2 13.5 L10.4 18.8 Z" fill="#fff" stroke="#fff" stroke-width="1.2" stroke-linejoin="round"/></svg>
<svg style="left:2361px;top:1770px" width="24" height="24" viewBox="0 0 24 24" ><rect x="1.2" y="1.2" width="21.6" height="21.6" rx="3" fill="none" stroke="#4a4a4a" stroke-width="2.2"/><path d="M8.4 5.6 L16.4 12.6 L12.8 13 L14.8 17.4 L12.9 18.2 L11 13.8 L8.4 16.2 Z" fill="#4a4a4a"/></svg>
<svg style="left:2415px;top:1771.5px" width="23.2" height="20.4" viewBox="0 0 24 21" ><rect x="1.0" y="1.0" width="5.2" height="7.6" rx="1" fill="none" stroke="#4a4a4a" stroke-width="1.7"/><rect x="9.6" y="1.0" width="5.2" height="7.6" rx="1" fill="none" stroke="#4a4a4a" stroke-width="1.7"/><rect x="18.2" y="1.0" width="5.2" height="7.6" rx="1" fill="none" stroke="#4a4a4a" stroke-width="1.7"/><rect x="1.0" y="12.2" width="5.2" height="7.6" rx="1" fill="none" stroke="#4a4a4a" stroke-width="1.7"/><rect x="9.6" y="12.2" width="5.2" height="7.6" rx="1" fill="none" stroke="#4a4a4a" stroke-width="1.7"/><rect x="18.2" y="12.2" width="5.2" height="7.6" rx="1" fill="none" stroke="#4a4a4a" stroke-width="1.7"/></svg>
<svg style="left:2496.5px;top:1770px" width="25" height="25" viewBox="0 0 25 25" ><rect x="1.1" y="1.1" width="22.8" height="9.6" rx="4.8" fill="none" stroke="#4a4a4a" stroke-width="2.1"/><circle cx="6.6" cy="5.9" r="2.7" fill="#4a4a4a"/><rect x="0" y="14.2" width="25" height="10.8" rx="5.4" fill="#4a4a4a"/><circle cx="18.6" cy="19.6" r="3" fill="#fff"/></svg>
<svg style="left:2581px;top:1771px" width="14" height="23.4" viewBox="0 0 16 24" ><rect x="1.1" y="1.1" width="13.8" height="21.8" rx="2.6" fill="#c9c9c9" stroke="#4a4a4a" stroke-width="2"/><path d="M6 2.6 H10 M5.4 21 H10.6" stroke="#4a4a4a" stroke-width="1.2" stroke-linecap="round"/></svg>
<svg style="left:2811.1px;top:1769.7px" width="26" height="26" viewBox="0 0 26 26" ><circle cx="10.6" cy="10.6" r="9" fill="none" stroke="#4a4a4a" stroke-width="3"/><path d="M17.4 17.4 L23.8 23.8" stroke="#4a4a4a" stroke-width="3.6" stroke-linecap="round"/><path d="M6.6 10.6 H14.6" stroke="#4a4a4a" stroke-width="2.2" stroke-linecap="round"/></svg>
<svg style="left:2859.1px;top:1769.7px" width="26" height="26" viewBox="0 0 26 26" ><circle cx="10.6" cy="10.6" r="9" fill="none" stroke="#4a4a4a" stroke-width="3"/><path d="M17.4 17.4 L23.8 23.8" stroke="#4a4a4a" stroke-width="3.6" stroke-linecap="round"/><path d="M8.8 8 L11 6.4 V15" fill="none" stroke="#4a4a4a" stroke-width="2" stroke-linecap="round" stroke-linejoin="round"/></svg>
<svg style="left:2907.1px;top:1769.7px" width="26" height="26" viewBox="0 0 26 26" ><circle cx="10.6" cy="10.6" r="9" fill="none" stroke="#7e7e7e" stroke-width="3"/><path d="M17.4 17.4 L23.8 23.8" stroke="#7e7e7e" stroke-width="3.6" stroke-linecap="round"/><rect x="7.2" y="7.2" width="6.8" height="6.8" rx="1" fill="none" stroke="#7e7e7e" stroke-width="2"/></svg>
<svg style="left:2955.1px;top:1769.7px" width="26" height="26" viewBox="0 0 26 26" ><circle cx="10.6" cy="10.6" r="9" fill="none" stroke="#4a4a4a" stroke-width="3"/><path d="M17.4 17.4 L23.8 23.8" stroke="#4a4a4a" stroke-width="3.6" stroke-linecap="round"/><path d="M6.6 10.6 H14.6 M10.6 6.6 V14.6" stroke="#4a4a4a" stroke-width="2.2" stroke-linecap="round"/></svg>
</div>
<script>(function(){var w=window.innerWidth;if(w&&Math.abs(w-3024)>2){var s=w/3024,a=document.getElementById('app'),h=Math.round(1888*s)+'px';a.style.transformOrigin='0 0';a.style.transform='scale('+s+')';document.documentElement.style.width=document.body.style.width=w+'px';document.documentElement.style.height=document.body.style.height=h;}})();</script>
</body></html>
